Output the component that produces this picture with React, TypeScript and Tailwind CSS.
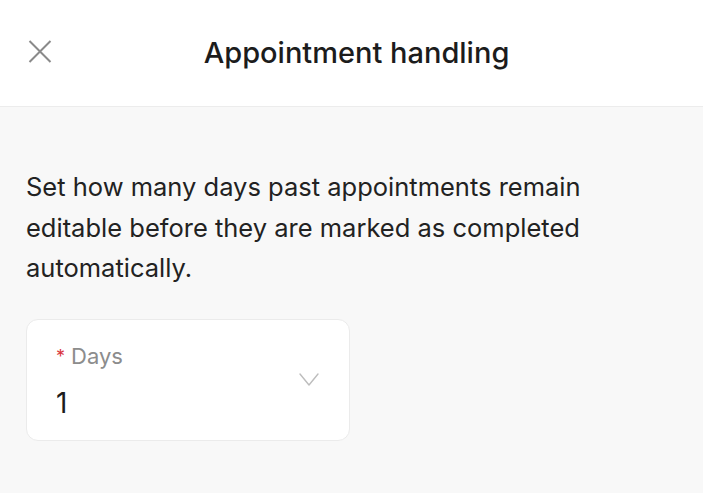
export default function App() {
  return (
    <div className="min-h-[493px] w-full bg-[#f8f8f8] font-['Inter',sans-serif]">
      <header className="relative flex h-[107px] items-center justify-center border-b border-[#ececec] bg-white pl-[10px]">
        <button className="absolute left-[28px] top-[40px] p-0 text-[#8a8a8a]">
          <svg width="24" height="23" viewBox="0 0 24 23" fill="none">
            <path d="M1.5 1l21 21M22.5 1l-21 21" stroke="currentColor" strokeWidth="2" />
          </svg>
        </button>
        <h1 className="text-[29px] font-medium text-[#1c1c1c]">Appointment handling</h1>
      </header>

      <main className="px-[26px] pt-[60px]">
        <p className="max-w-[600px] text-[25.5px] leading-[40.5px] text-[#222]">
          Set how many days past appointments remain editable before they are marked as completed
          automatically.
        </p>

        <div className="mt-[30px] flex h-[122px] w-[324px] items-center justify-between rounded-[12px] border border-[#ebebeb] bg-white pl-[29px] pr-[30px]">
          <div className="flex flex-col">
            <label className="flex items-center gap-[6px] text-[22px] text-[#8c8c8c]">
              <span className="text-[18px] text-[#d9363e]">*</span>
              Days
            </label>
            <span className="mt-[13px] text-[28px] leading-[34px] text-[#1c1c1c]">1</span>
          </div>
          <svg width="20" height="13" viewBox="0 0 20 13" fill="none" className="text-[#bdbdbd]">
            <path d="M1 1l9 11 9-11" stroke="currentColor" strokeWidth="1.4" strokeLinecap="round" strokeLinejoin="round" />
          </svg>
        </div>
      </main>
    </div>
  );
}
